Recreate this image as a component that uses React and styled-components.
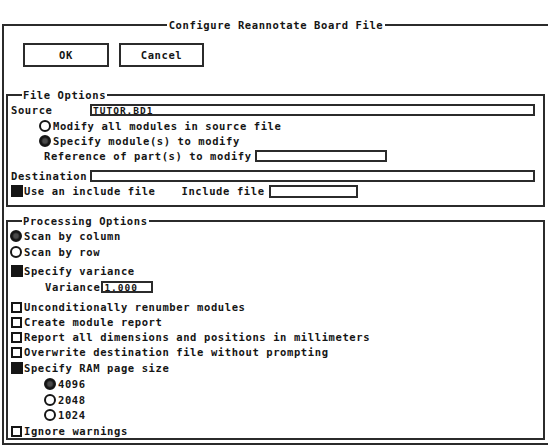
import styled, { createGlobalStyle } from "styled-components";

const GlobalStyle = createGlobalStyle`
  html, body {
    margin: 0;
    padding: 0;
    background: #fff;
    overflow: hidden;
  }
  body {
    font-family: "DejaVu Sans Mono", "Liberation Mono", monospace;
    font-weight: bold;
    font-size: 10.5px;
    letter-spacing: 0.6px;
    color: #151515;
  }
`;

const Dialog = () => {
  return (
    <Frame>
      <Title>Configure Reannotate Board File</Title>
      <ButtonRow>
        <Button $w={86}>OK</Button>
        <Button $w={85}>Cancel</Button>
      </ButtonRow>

      <Group $mt={22}>
        <GroupTitle>File Options</GroupTitle>
        <Row $mt={2} $indent={3}>
          <Label $w={79}>Source</Label>
          <Field $w={445}>TUTOR.BD1</Field>
        </Row>
        <Row $mt={2} $indent={31}>
          <Radio />
          <Label>Modify all modules in source file</Label>
        </Row>
        <Row $mt={1} $indent={31}>
          <Radio $on />
          <Label>Specify module(s) to modify</Label>
        </Row>
        <Row $mt={1} $indent={36}>
          <Label>Reference of part(s) to modify</Label>
          <Field $w={132} $ml={3} />
        </Row>
        <Row $mt={6} $indent={3}>
          <Label $w={79}>Destination</Label>
          <Field $w={445} />
        </Row>
        <Row $mt={1} $indent={3}>
          <Check $on />
          <Label>Use an include file</Label>
          <Label $ml={26}>Include file</Label>
          <Field $w={89} $h={13} $ml={4} />
        </Row>
      </Group>

      <Group $mt={8} $pb={0}>
        <GroupTitle>Processing Options</GroupTitle>
        <Row $mt={2} $indent={2}>
          <Radio $on />
          <Label>Scan by column</Label>
        </Row>
        <Row $mt={2} $indent={2}>
          <Radio />
          <Label>Scan by row</Label>
        </Row>
        <Row $mt={5} $indent={3}>
          <Check $on />
          <Label>Specify variance</Label>
        </Row>
        <Row $mt={2} $indent={37}>
          <Label>Variance</Label>
          <Field $w={52} $ml={1}>1.000</Field>
        </Row>
        <Row $mt={6} $indent={3}>
          <Check />
          <Label>Unconditionally renumber modules</Label>
        </Row>
        <Row $mt={1} $indent={3}>
          <Check />
          <Label>Create module report</Label>
        </Row>
        <Row $mt={1} $indent={3}>
          <Check />
          <Label>Report all dimensions and positions in millimeters</Label>
        </Row>
        <Row $mt={1} $indent={3}>
          <Check />
          <Label>Overwrite destination file without prompting</Label>
        </Row>
        <Row $mt={2} $indent={3}>
          <Check $on />
          <Label>Specify RAM page size</Label>
        </Row>
        <Row $mt={2} $indent={36}>
          <Radio $on />
          <Label>4096</Label>
        </Row>
        <Row $mt={2} $indent={36}>
          <Radio />
          <Label>2048</Label>
        </Row>
        <Row $mt={1} $indent={36}>
          <Radio />
          <Label>1024</Label>
        </Row>
        <Row $mt={2} $indent={3}>
          <Check />
          <Label>Ignore warnings</Label>
        </Row>
      </Group>
    </Frame>
  );
};

const Frame = styled.fieldset`
  box-sizing: border-box;
  margin: 19px 0 0 2px;
  padding: 0 0 3px 0;
  width: 548px;
  min-width: 0;
  border: 2px solid #2b2b2b;
`;
const Title = styled.legend`
  margin: 0 auto;
  padding: 0 2px;
  line-height: 12px;
  height: 12px;
`;
const ButtonRow = styled.div`
  display: flex;
  gap: 10px;
  padding: 12px 0 0 19px;
`;
const Button = styled.button`
  box-sizing: border-box;
  width: ${({ $w }) => $w}px;
  height: 24px;
  padding: 0;
  border: 2px solid #2b2b2b;
  border-radius: 0;
  background: #fff;
  font: inherit;
  letter-spacing: inherit;
  color: inherit;
`;
const Group = styled.fieldset`
  box-sizing: border-box;
  margin: ${({ $mt }) => $mt}px 0 0 2px;
  padding: 0 0 ${({ $pb }) => ($pb === undefined ? 7 : $pb)}px 0;
  width: 539px;
  min-width: 0;
  border: 2px solid #2b2b2b;
`;
const GroupTitle = styled.legend`
  margin-left: 14px;
  padding: 0 1px;
  line-height: 12px;
  height: 12px;
`;
const Row = styled.div`
  display: flex;
  align-items: center;
  height: 14px;
  margin-top: ${({ $mt }) => $mt || 0}px;
  padding-left: ${({ $indent }) => $indent || 0}px;
  white-space: nowrap;
`;
const Label = styled.span`
  display: inline-block;
  line-height: 14px;
  width: ${({ $w }) => ($w ? `${$w}px` : "auto")};
  margin-left: ${({ $ml }) => $ml || 0}px;
`;
const Field = styled.div`
  box-sizing: border-box;
  display: flex;
  align-items: center;
  width: ${({ $w }) => $w}px;
  height: ${({ $h }) => $h || 12}px;
  margin-left: ${({ $ml }) => $ml || 0}px;
  border: 2px solid #2b2b2b;
  padding: 1px 0 0 1px;
  font-size: 9.5px;
  letter-spacing: 1px;
  line-height: 8px;
`;
const Radio = styled.span`
  box-sizing: border-box;
  flex: none;
  width: 12px;
  height: 12px;
  margin-right: 2px;
  border-radius: 50%;
  border: 2px solid #151515;
  background: ${({ $on }) =>
    $on ? "radial-gradient(circle, #4a4a4a 0 35%, #151515 70%)" : "#fff"};
`;
const Check = styled.span`
  box-sizing: border-box;
  flex: none;
  width: ${({ $on }) => ($on ? 12 : 11)}px;
  height: ${({ $on }) => ($on ? 12 : 11)}px;
  margin-right: ${({ $on }) => ($on ? 1 : 2)}px;
  border: 2px solid #151515;
  background: ${({ $on }) => ($on ? "#151515" : "#fff")};
`;

export default function App() {
  return (
    <>
      <GlobalStyle />
      <Dialog />
    </>
  );
}
